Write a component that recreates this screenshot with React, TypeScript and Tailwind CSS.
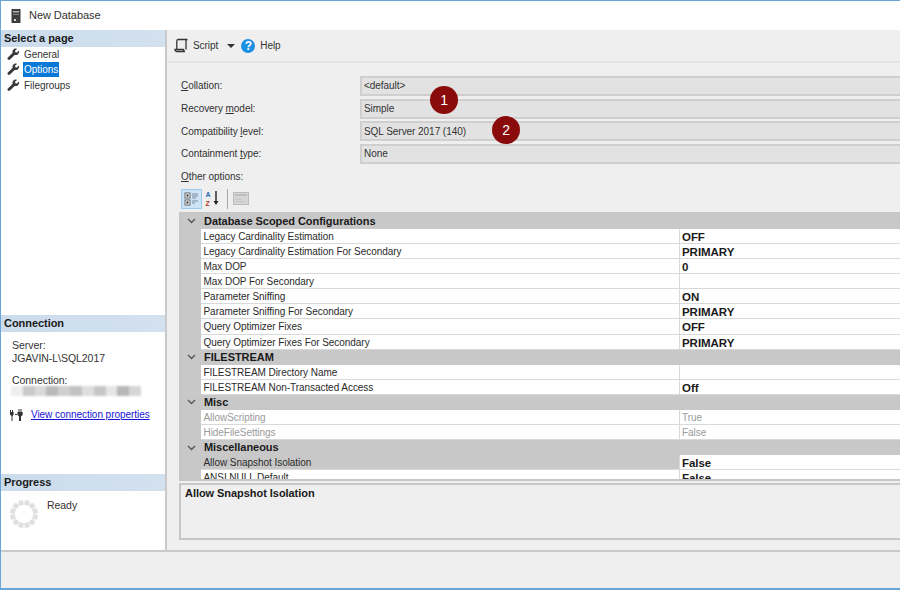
const font = "font-['Liberation_Sans',Arial,sans-serif]";

function Wrench() {
  return (
    <svg width="13" height="13" viewBox="0 0 13 13" className="shrink-0">
      <path d="M12 2.600 9.900 4.600 8.400 4.200 8 2.800 10 .9C8.600.3 7 .7 6.200 1.700 5.400 2.600 5.300 3.800 5.700 4.800L.9 9.400C.3 10 .3 10.900.9 11.500 1.500 12.100 2.400 12.100 3 11.500L7.700 6.900C8.800 7.300 10.100 7.100 11 6.200 12 5.300 12.400 3.900 12 2.600Z" fill="#3a3a3a" />
    </svg>
  );
}

function ServerIcon() {
  return (
    <svg width="10" height="14" viewBox="0 0 10 14">
      <rect x="0.500" y="0" width="9" height="14" rx="0.500" fill="#3c3c3c" />
      <rect x="2" y="2" width="6" height="1.500" fill="#b5b5b5" />
      <rect x="2" y="5" width="6" height="1" fill="#8a8a8a" />
      <rect x="3" y="10" width="2" height="2" fill="#d8d8d8" />
    </svg>
  );
}

function ScriptIcon() {
  return (
    <svg width="15" height="15" viewBox="0 0 15 15" fill="none" stroke="#333" strokeWidth="1.300">
      <path d="M4 1.500h9.500c-1 0-1.500.8-1.500 2v8" />
      <path d="M4 1.500c-1 0-1.200 1-1.200 2v8" />
      <path d="M1 11.500h8.500c0 1.200.6 2 1.500 2H2.500c-1 0-1.500-.8-1.500-2Z" />
    </svg>
  );
}

function HelpIcon() {
  return (
    <span className="flex h-[14px] w-[14px] items-center justify-center rounded-full bg-[#1c8fe3] text-[12px] font-bold leading-none text-white">
      ?
    </span>
  );
}

function PlugIcon() {
  return (
    <svg width="14" height="12" viewBox="0 0 14 12" fill="#333">
      <path d="M0 1h1v2h1V1h1v2h.6v2.500L2.500 7v5h-1V7L0 5.500Z" />
      <path d="M8.500 0h1v3h1V0h1v3h1.200v3l-1.700 1.500V12h-2V7.500L7.500 6V3h1Z" />
      <path d="M5 5h2v1H5Z" />
    </svg>
  );
}

function Spinner() {
  const dots = Array.from({ length: 12 }, (_, i) => (i * 360) / 12);
  return (
    <svg width="30" height="30" viewBox="0 0 30 30">
      {dots.map((a) => (
        <rect key={a} x="12.500" y="1" width="5" height="5" rx="0.800" fill="#e0e0e0" transform={`rotate(${a + 15} 15 15)`} />
      ))}
    </svg>
  );
}

function CategorizedIcon() {
  return (
    <svg width="16" height="16" viewBox="0 0 16 16">
      <rect x="1" y="2" width="5" height="5" fill="#fff" stroke="#666" />
      <rect x="2.500" y="3.500" width="2" height="2" fill="#222" />
      <rect x="1" y="9" width="5" height="5" fill="#fff" stroke="#666" />
      <rect x="2.500" y="10.500" width="2" height="2" fill="#222" />
      <path d="M8 3h6M8 5h6M8 7h4M8 10h6M8 12h3" stroke="#7a8a9a" strokeWidth="1" />
    </svg>
  );
}

function SortIcon() {
  return (
    <svg width="17" height="17" viewBox="0 0 17 17">
      <text x="0.500" y="7" fontSize="7" fontWeight="700" fill="#2b6cb8" fontFamily="Liberation Sans">A</text>
      <text x="0.500" y="16" fontSize="7" fontWeight="700" fill="#b03a2e" fontFamily="Liberation Sans">Z</text>
      <path d="M11 1v12" stroke="#222" strokeWidth="1.400" />
      <path d="M8.500 11 11 15l2.500-4Z" fill="#222" />
    </svg>
  );
}

function PagesIcon() {
  return (
    <svg width="16" height="15" viewBox="0 0 16 15">
      <rect x="0.500" y="1.500" width="15" height="12" fill="#d6d6d6" stroke="#bcbcbc" />
      <rect x="2" y="3" width="12" height="2" fill="#bdbdbd" />
      <path d="M3 8h6M3 10.500h9" stroke="#c2c2c2" />
    </svg>
  );
}

function Chevron() {
  return (
    <svg width="9" height="6" viewBox="0 0 9 6" fill="none" stroke="#555" strokeWidth="1.300">
      <path d="M1 1l3.500 3.500L8 1" />
    </svg>
  );
}

function SectionHead({ title }: { title: string }) {
  return (
    <div className="h-[17px] bg-[linear-gradient(90deg,#cbdcec,#d3e1ef)] pl-[3px] text-[11px] font-bold leading-[17px] text-[#1b1b1b]">
      {title}
    </div>
  );
}

function Field({ label, value }: { label: React.ReactNode; value: string }) {
  return (
    <div className="flex h-[22.700px] items-center">
      <div className="w-[179px] shrink-0 text-[#333]">{label}</div>
      <div className="flex h-[20px] flex-1 items-center border-2 border-r-0 border-[#cfcfcf] bg-[#e2e2e2] pl-[2px] text-[#333]">
        {value}
      </div>
    </div>
  );
}

type Row = { name: string; value?: string; muted?: boolean; selected?: boolean };
type Group = { title: string; rows: Row[] };

const groups: Group[] = [
  {
    title: "Database Scoped Configurations",
    rows: [
      { name: "Legacy Cardinality Estimation", value: "OFF" },
      { name: "Legacy Cardinality Estimation For Secondary", value: "PRIMARY" },
      { name: "Max DOP", value: "0" },
      { name: "Max DOP For Secondary" },
      { name: "Parameter Sniffing", value: "ON" },
      { name: "Parameter Sniffing For Secondary", value: "PRIMARY" },
      { name: "Query Optimizer Fixes", value: "OFF" },
      { name: "Query Optimizer Fixes For Secondary", value: "PRIMARY" },
    ],
  },
  {
    title: "FILESTREAM",
    rows: [
      { name: "FILESTREAM Directory Name" },
      { name: "FILESTREAM Non-Transacted Access", value: "Off" },
    ],
  },
  {
    title: "Misc",
    rows: [
      { name: "AllowScripting", value: "True", muted: true },
      { name: "HideFileSettings", value: "False", muted: true },
    ],
  },
  {
    title: "Miscellaneous",
    rows: [
      { name: "Allow Snapshot Isolation", value: "False", selected: true },
      { name: "ANSI NULL Default", value: "False" },
    ],
  },
];

function Blurred() {
  const shades = ["#eeeeee", "#c9c9c9", "#d9d9d9", "#b9b9b9", "#cfcfcf", "#c2c2c2", "#dedede", "#c6c6c6", "#e6e6e6", "#b7b7b7", "#d6d6d6"];
  return (
    <div className="ml-[10px] flex h-[10px] w-[130px] blur-[1px]">
      {shades.map((c, i) => (
        <div key={i} className="flex-1" style={{ backgroundColor: c }} />
      ))}
    </div>
  );
}

export default function App() {
  return (
    <div className={`relative flex h-[590px] w-[900px] flex-col overflow-hidden border-b-2 border-l border-t border-[#6aa5d8] bg-[#efefef] text-[10px] tracking-[-0.050px] ${font}`}>
      <div className="flex h-[29px] shrink-0 items-center gap-[8px] bg-white pl-[10px] text-[11px] text-[#333]">
        <ServerIcon />
        <span>New Database</span>
      </div>

      <div className="flex h-[522px] shrink-0 border-b-2 border-[#c9c9c9]">
        <aside className="flex w-[166px] shrink-0 flex-col border-r-2 border-[#c9c9c9] bg-white">
          <SectionHead title="Select a page" />
          <div className="flex flex-col gap-[0.700px] pl-[6px] pt-[0.500px] text-[#333]">
            <div className="flex h-[14.500px] items-center gap-[3px]"><Wrench /><span className="px-[1px]">General</span></div>
            <div className="flex h-[14.500px] items-center gap-[3px]"><Wrench /><span className="bg-[#0a78d7] px-[1px] text-white">Options</span></div>
            <div className="flex h-[14.500px] items-center gap-[3px]"><Wrench /><span className="px-[1px]">Filegroups</span></div>
          </div>

          <div className="mt-[223px]"><SectionHead title="Connection" /></div>
          <div className="pl-[11px] pt-[7px] text-[10.500px] leading-[13px] text-[#333]">
            <div>Server:</div>
            <div>JGAVIN-L\SQL2017</div>
            <div className="mt-[9px]">Connection:</div>
          </div>
          <div className="-mt-[1px]"><Blurred /></div>
          <div className="mt-[11px] flex items-center gap-[7px] pl-[9px]">
            <PlugIcon />
            <span className="text-[#1414d8] underline">View connection properties</span>
          </div>

          <div className="mt-[52px]"><SectionHead title="Progress" /></div>
          <div className="flex pl-[8px] pt-[7px] text-[#333]">
            <span className="mt-[1px]"><Spinner /></span>
            <span className="ml-[8px] text-[10.500px]">Ready</span>
          </div>
        </aside>

        <main className="flex min-w-0 flex-1 flex-col">
          <div className="flex h-[33px] shrink-0 items-center border-b-2 border-[#e4e4e4] pl-[7px] text-[#333]">
            <ScriptIcon />
            <span className="ml-[4px]">Script</span>
            <span className="ml-[9px] h-0 w-0 border-x-[4px] border-t-[4px] border-x-transparent border-t-[#333]" />
            <span className="ml-[6px]"><HelpIcon /></span>
            <span className="ml-[5px]">Help</span>
          </div>

          <div className="flex min-h-0 flex-1 flex-col pl-[12px] pt-[11.500px]">
            <div className="flex flex-col pl-[2px]">
              <Field label={<><u>C</u>ollation:</>} value="<default>" />
              <Field label={<>Recovery <u>m</u>odel:</>} value="Simple" />
              <Field label={<>Compatibility <u>l</u>evel:</>} value="SQL Server 2017 (140)" />
              <Field label={<>Containment <u>t</u>ype:</>} value="None" />
            </div>
            <div className="mt-[4.500px] h-[13px] pl-[2px] leading-[13px] text-[#333]"><u>O</u>ther options:</div>

            <div className="mt-[5px] flex h-[22px] items-center gap-[3px] pl-[2px]">
              <span className="flex h-[20px] w-[21px] items-center justify-center border border-[#9ccbee] bg-[#cde4f7]"><CategorizedIcon /></span>
              <SortIcon />
              <span className="ml-[2px] h-[20px] w-px bg-[#a8a8a8]" />
              <span className="ml-[2px]"><PagesIcon /></span>
            </div>

            <div className="mt-[2px] h-[269px] overflow-hidden border-2 border-r-0 border-[#c6c6c6] bg-[#c8c8c8]">
              {groups.map((g) => (
                <div key={g.title}>
                  <div className="flex h-[15.100px] items-center">
                    <span className="flex w-[20px] justify-center"><Chevron /></span>
                    <span className="pl-[3px] text-[11px] font-bold leading-none text-[#1a1a1a]">{g.title}</span>
                  </div>
                  {g.rows.map((r) => (
                    <div key={r.name} className="ml-[20px] flex h-[15.100px] border-b border-[#d9d9d9]">
                      <div className={`w-[478px] shrink-0 truncate pl-[2.500px] leading-[16px] ${r.selected ? "bg-[#c8c8c8]" : "bg-white"} ${r.muted ? "text-[#9a9a9a]" : "text-[#2a2a2a]"}`}>
                        {r.name}
                      </div>
                      <div className={`flex-1 border-l border-[#d9d9d9] bg-white pl-[2px] ${r.muted ? "leading-[16px] text-[#9a9a9a]" : "text-[11.500px] font-bold leading-[16px] text-[#1a1a1a]"}`}>
                        {r.value}
                      </div>
                    </div>
                  ))}
                </div>
              ))}
            </div>

            <div className="mt-[2px] h-[57px] border-2 border-r-0 border-[#c6c6c6] pl-[4px] text-[11px] font-bold text-[#1a1a1a]">
              Allow Snapshot Isolation
            </div>
          </div>
        </main>
      </div>

      <span className="absolute left-[429px] top-[85px] flex h-[28px] w-[28px] items-center justify-center rounded-full bg-[#8a0b0b] text-[14px] text-white">1</span>
      <span className="absolute left-[491px] top-[115px] flex h-[28px] w-[28px] items-center justify-center rounded-full bg-[#8a0b0b] text-[14px] text-white">2</span>
    </div>
  );
}
